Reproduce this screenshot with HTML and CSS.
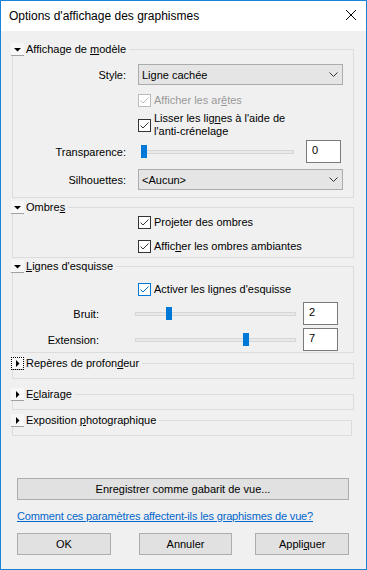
FILE: index.html
```html
<!DOCTYPE html>
<html lang="fr">
<head>
    <meta charset="UTF-8">
    <meta name="viewport" content="width=device-width, initial-scale=1.0">
    <title>Options d'affichage des graphismes</title>
    <link rel="stylesheet" href="styles.css">
</head>
<body>
    <div class="dialog">
        <div class="titlebar">
            <span class="title">Options d'affichage des graphismes</span>
            <svg class="close" width="10" height="10" viewBox="0 0 10 10"><path d="M0 0L10 10M10 0L0 10" stroke="#000" stroke-width="1"/></svg>
        </div>

        <div class="content">
            <fieldset class="group group-model">
                <legend>
                    <span class="toggle"><svg width="13" height="13" viewBox="0 0 13 13"><polygon points="3,5 10,5 6.5,8.5" fill="#000"/></svg></span>
                    <span class="group-title">Affichage de <u>m</u>odèle</span>
                </legend>
                <div class="group-body">
                    <div class="row row-style">
                        <span class="label">Style:</span>
                        <div class="select"><span>Ligne cachée</span><svg width="9" height="5" viewBox="0 0 9 5"><path d="M0.5 0.5L4.5 4.5L8.5 0.5" fill="none" stroke="#333"/></svg></div>
                    </div>
                    <div class="check disabled row-edges">
                        <span class="box"><svg width="11" height="11" viewBox="0 0 11 11"><path d="M1.5 5.5L4 8L9.5 2.5" fill="none" stroke="#bcbcbc"/></svg></span>
                        <span>Afficher les ar<u>ê</u>tes</span>
                    </div>
                    <div class="check row-smooth">
                        <span class="box"><svg width="11" height="11" viewBox="0 0 11 11"><path d="M1.5 5.5L4 8L9.5 2.5" fill="none" stroke="#333"/></svg></span>
                        <span class="two-lines">Lisser les lig<u>n</u>es à l'aide de<br>l'anti-crénelage</span>
                    </div>
                    <div class="row row-transp">
                        <span class="label">Transparence:</span>
                        <div class="slider slider-transp"><span class="track"></span><span class="thumb" style="left: 0px"></span></div>
                        <div class="num num-transp">0</div>
                    </div>
                    <div class="row row-silh">
                        <span class="label">Silhouettes:</span>
                        <div class="select"><span>&lt;Aucun&gt;</span><svg width="9" height="5" viewBox="0 0 9 5"><path d="M0.5 0.5L4.5 4.5L8.5 0.5" fill="none" stroke="#333"/></svg></div>
                    </div>
                </div>
            </fieldset>

            <fieldset class="group group-shadows">
                <legend>
                    <span class="toggle"><svg width="13" height="13" viewBox="0 0 13 13"><polygon points="3,5 10,5 6.5,8.5" fill="#000"/></svg></span>
                    <span class="group-title">Ombre<u>s</u></span>
                </legend>
                <div class="group-body">
                    <div class="check row-cast">
                        <span class="box"><svg width="11" height="11" viewBox="0 0 11 11"><path d="M1.5 5.5L4 8L9.5 2.5" fill="none" stroke="#333"/></svg></span>
                        <span>Pro<u>j</u>eter des ombres</span>
                    </div>
                    <div class="check row-ambient">
                        <span class="box"><svg width="11" height="11" viewBox="0 0 11 11"><path d="M1.5 5.5L4 8L9.5 2.5" fill="none" stroke="#333"/></svg></span>
                        <span>Affic<u>h</u>er les ombres ambiantes</span>
                    </div>
                </div>
            </fieldset>

            <fieldset class="group group-sketch">
                <legend>
                    <span class="toggle"><svg width="13" height="13" viewBox="0 0 13 13"><polygon points="3,5 10,5 6.5,8.5" fill="#000"/></svg></span>
                    <span class="group-title"><u>L</u>ignes d'esquisse</span>
                </legend>
                <div class="group-body">
                    <div class="check hot row-sketch">
                        <span class="box"><svg width="11" height="11" viewBox="0 0 11 11"><path d="M1.5 5.5L4 8L9.5 2.5" fill="none" stroke="#0078d7"/></svg></span>
                        <span>Activer les li<u>g</u>nes d'esquisse</span>
                    </div>
                    <div class="row row-jitter">
                        <span class="label label-short">Bruit:</span>
                        <div class="slider slider-sketch"><span class="track"></span><span class="thumb" style="left: 31px"></span></div>
                        <div class="num num-sketch">2</div>
                    </div>
                    <div class="row row-extension">
                        <span class="label label-short">Extension:</span>
                        <div class="slider slider-sketch"><span class="track"></span><span class="thumb" style="left: 108px"></span></div>
                        <div class="num num-sketch">7</div>
                    </div>
                </div>
            </fieldset>

            <fieldset class="group collapsed group-depth">
                <legend>
                    <span class="toggle focused"><svg width="13" height="13" viewBox="0 0 13 13"><polygon points="5,3 5,10 8.5,6.5" fill="#000"/></svg></span>
                    <span class="group-title">Repères de profon<u>d</u>eur</span>
                </legend>
                <div class="group-body"></div>
            </fieldset>

            <fieldset class="group collapsed group-light">
                <legend>
                    <span class="toggle"><svg width="13" height="13" viewBox="0 0 13 13"><polygon points="5,3 5,10 8.5,6.5" fill="#000"/></svg></span>
                    <span class="group-title">E<u>c</u>lairage</span>
                </legend>
                <div class="group-body"></div>
            </fieldset>

            <fieldset class="group collapsed group-photo">
                <legend>
                    <span class="toggle"><svg width="13" height="13" viewBox="0 0 13 13"><polygon points="5,3 5,10 8.5,6.5" fill="#000"/></svg></span>
                    <span class="group-title">Exposition <u>p</u>hotographique</span>
                </legend>
                <div class="group-body"></div>
            </fieldset>
        </div>

        <div class="footer">
            <button class="wide">Enregistrer comme gabarit de vue...</button>
            <a class="help" href="#">Comment ces paramètres affectent-ils les graphismes de vue?</a>
            <div class="actions">
                <button class="btn-ok">OK</button>
                <button class="btn-cancel">Annuler</button>
                <button class="btn-apply">Appli<u>q</u>uer</button>
            </div>
        </div>
    </div>
</body>
</html>
```

FILE: styles.css
```css
body, html {
    margin: 0;
    background-color: #f0f0f0;
}
body {
    font-family: "Liberation Sans", Arial, sans-serif;
    font-size: 11px;
    color: #000;
}
u {
    text-decoration-thickness: 1px;
    text-underline-offset: 1px;
}
.dialog {
    width: 367px;
    height: 570px;
    box-sizing: border-box;
    border: 1px solid #1883d7;
    background-color: #f0f0f0;
    display: flex;
    flex-direction: column;
}
.titlebar {
    height: 30px;
    background-color: #fff;
    display: flex;
    align-items: center;
    justify-content: space-between;
    padding: 0 10px 0 8px;
    flex-shrink: 0;
}
.title {
    font-size: 12px;
    line-height: 16px;
}
.close {
    margin-bottom: 2px;
}
.content {
    padding: 11px 12px 0 11px;
}

/* group boxes */
.group {
    margin: 0;
    padding: 0;
    border: 1px solid #dcdcdc;
    min-inline-size: 0;
}
.group legend {
    display: flex;
    align-items: center;
    height: 14px;
    padding: 0 3px 0 0;
    margin-left: -2px;
}
.toggle {
    width: 13px;
    height: 13px;
    box-sizing: border-box;
    background-color: #f7f7f7;
    border-bottom: 1px solid #a0a0a0;
    margin-right: 2px;
    display: flex;
}
.toggle svg {
    display: block;
}
.toggle.focused {
    outline: 1px dotted #000;
    outline-offset: -1px;
}
.group-title {
    line-height: 14px;
}
.group-shadows { margin-top: 2px; }
.group-sketch { margin-top: 1px; }
.group-depth { margin-top: 3px; }
.group-light { margin-top: 8px; }
.group-photo { margin-top: 3px; margin-right: 2px; }
.collapsed .group-body {
    height: 8px;
}

.group-model .group-body { padding: 8px 0 7px; }
.group-shadows .group-body { padding: 0 0 3px; }
.group-sketch .group-body { padding: 8px 0 1px; }

.row {
    display: flex;
    align-items: center;
}
.label {
    width: 113px;
    text-align: right;
    flex-shrink: 0;
}
.label-short {
    width: 86px;
}

/* combo boxes */
.select {
    width: 205px;
    height: 21px;
    box-sizing: border-box;
    margin-left: 12px;
    border: 1px solid #acacac;
    background-color: #e5e5e5;
    display: flex;
    align-items: center;
    justify-content: space-between;
    padding: 0 4px 0 3px;
}
.select svg {
    display: block;
}
.row-edges { margin-top: 7px; }
.row-smooth { margin-top: 4px; }
.row-transp { margin-top: 2px; }
.row-silh { margin-top: 6px; }

/* checkboxes */
.check {
    display: flex;
    align-items: center;
    padding-left: 125px;
    min-height: 16px;
}
.check .box {
    width: 13px;
    height: 13px;
    box-sizing: border-box;
    border: 1px solid #333;
    background-color: #fff;
    margin-right: 3px;
    flex-shrink: 0;
}
.check .box svg {
    display: block;
}
.check.disabled {
    color: #999;
}
.check.disabled .box {
    border-color: #bcbcbc;
}
.check.hot .box {
    border-color: #0078d7;
}
.two-lines {
    line-height: 13px;
}
.row-ambient { margin-top: 8px; }
.row-jitter { margin-top: 5px; }
.row-extension { margin-top: 3px; }

/* sliders */
.slider {
    position: relative;
    height: 13px;
    display: flex;
    align-items: center;
    flex-shrink: 0;
}
.slider-transp {
    width: 153px;
    margin-left: 15px;
}
.slider-sketch {
    width: 161px;
    margin-left: 36px;
}
.track {
    width: 100%;
    height: 4px;
    box-sizing: border-box;
    background-color: #e7eaea;
    border: 1px solid #d6d6d6;
}
.thumb {
    position: absolute;
    top: 0;
    width: 6px;
    height: 13px;
    background-color: #0078d7;
}

/* number fields */
.num {
    width: 35px;
    height: 23px;
    box-sizing: border-box;
    border: 1px solid #7a7a7a;
    background-color: #fff;
    padding: 2px 0 0 5px;
    line-height: 14px;
    flex-shrink: 0;
}
.num-transp {
    margin-left: 12px;
}
.num-sketch {
    margin-left: 7px;
}

/* bottom area */
.footer {
    padding: 42px 17px 0 16px;
    display: flex;
    flex-direction: column;
}
button {
    height: 22px;
    box-sizing: border-box;
    border: 1px solid #adadad;
    background-color: #e1e1e1;
    font-family: "Liberation Sans", Arial, sans-serif;
    font-size: 11px;
    color: #000;
    padding: 0;
    cursor: pointer;
}
.wide {
    width: 332px;
}
.help {
    margin-top: 8px;
    line-height: 16px;
    color: #0066cc;
    white-space: nowrap;
    letter-spacing: -0.15px;
    text-decoration-thickness: 1px;
}
.actions {
    display: flex;
    margin-top: 9px;
}
.actions button {
    width: 94px;
}
.btn-cancel { margin-left: 28px; }
.btn-apply { margin-left: 23px; }
```
